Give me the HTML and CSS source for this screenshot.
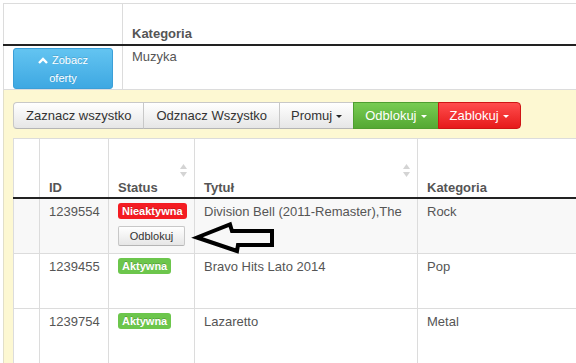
FILE: index.html
```html
<!DOCTYPE html>
<html lang="pl">
<head>
    <meta charset="UTF-8">
    <title>Oferty</title>
    <link rel="stylesheet" href="styles.css">
</head>
<body>
    <div class="page">
        <table class="offer">
            <thead>
                <tr>
                    <th class="offer-action"></th>
                    <th>Kategoria</th>
                </tr>
            </thead>
            <tbody>
                <tr>
                    <td class="offer-action">
                        <button class="btn-info">
                            <svg class="chevron" width="10" height="7" viewBox="0 0 10 7"><polyline points="1,6 5,2 9,6" fill="none" stroke="#fff" stroke-width="2.4"/></svg>
                            Zobacz<br>oferty
                        </button>
                    </td>
                    <td>Muzyka</td>
                </tr>
            </tbody>
        </table>

        <div class="panel">
            <div class="btn-group">
                <button class="btn">Zaznacz wszystko</button>
                <button class="btn">Odznacz Wszystko</button>
                <button class="btn btn-drop">Promuj<span class="caret"></span></button>
                <button class="btn btn-drop btn-success">Odblokuj<span class="caret"></span></button>
                <button class="btn btn-drop btn-danger">Zablokuj<span class="caret"></span></button>
            </div>

            <table class="items">
                <colgroup>
                    <col class="col-check">
                    <col class="col-id">
                    <col class="col-status">
                    <col class="col-title">
                    <col class="col-cat">
                </colgroup>
                <thead>
                    <tr>
                        <th></th>
                        <th>ID</th>
                        <th>
                            <div class="sortable">
                                <svg class="sort-icon" width="7" height="13" viewBox="0 0 7 13"><polygon points="3.5,0 7,5 0,5" fill="#d4d4d4"/><polygon points="0,8 7,8 3.5,13" fill="#d4d4d4"/></svg>
                                Status
                            </div>
                        </th>
                        <th>
                            <div class="sortable">
                                <svg class="sort-icon" width="7" height="13" viewBox="0 0 7 13"><polygon points="3.5,0 7,5 0,5" fill="#d4d4d4"/><polygon points="0,8 7,8 3.5,13" fill="#d4d4d4"/></svg>
                                Tytuł
                            </div>
                        </th>
                        <th>Kategoria</th>
                    </tr>
                </thead>
                <tbody>
                    <tr class="row-marked">
                        <td></td>
                        <td>1239554</td>
                        <td>
                            <span class="label label-off">Nieaktywna</span>
                            <button class="btn-mini">Odblokuj</button>
                        </td>
                        <td class="title-cell">
                            Division Bell (2011-Remaster),The
                            <svg class="pointer" width="86" height="38" viewBox="0 0 86 38"><polygon points="6,19.5 39,6.5 41,13 81,13 81,27 47,27 46,33" fill="none" stroke="#000" stroke-width="4" stroke-linejoin="miter"/></svg>
                        </td>
                        <td>Rock</td>
                    </tr>
                    <tr>
                        <td></td>
                        <td>1239455</td>
                        <td><span class="label label-on">Aktywna</span></td>
                        <td>Bravo Hits Lato 2014</td>
                        <td>Pop</td>
                    </tr>
                    <tr>
                        <td></td>
                        <td>1239754</td>
                        <td><span class="label label-on">Aktywna</span></td>
                        <td>Lazaretto</td>
                        <td>Metal</td>
                    </tr>
                </tbody>
            </table>
        </div>
    </div>
</body>
</html>
```

FILE: styles.css
```css
* {
    box-sizing: border-box;
}

html,
body {
    overflow: hidden;
}

body {
    margin: 0;
    background: #fff;
    color: #555;
    font-family: "Liberation Sans", Arial, sans-serif;
    font-size: 13px;
    line-height: 18px;
}

.page {
    width: 760px;
    padding: 3px 0 0 3px;
}

/* top offer table */
.offer {
    width: 100%;
    border-collapse: collapse;
    border-top: 1px solid #dcdcdc;
    border-left: 1px solid #dcdcdc;
}

.offer th {
    height: 41px;
    padding: 0 9px 1px;
    text-align: left;
    vertical-align: bottom;
    font-weight: bold;
    border-left: 1px solid #dcdcdc;
    border-bottom: 2px solid #222;
}

.offer td {
    padding: 2px 9px 0;
    vertical-align: top;
    border-left: 1px solid #dcdcdc;
    border-bottom: 1px solid #dcdcdc;
}

.offer .offer-action {
    width: 119px;
}

.btn-info {
    display: block;
    width: 100px;
    padding: 2px 6px 1px;
    border: 1px solid #3b9fd8;
    border-radius: 3px;
    background: linear-gradient(#63c4f1, #3ea8e2);
    color: #fff;
    font-family: inherit;
    font-size: 11px;
    line-height: 18px;
    text-shadow: 0 -1px 0 rgba(0, 0, 0, 0.15);
}

.chevron {
    margin-right: 1px;
    vertical-align: 0;
}

/* yellow panel */
.panel {
    min-height: 300px;
    padding: 12px 0 0 9px;
    background: #fdf8d2;
    border-left: 1px solid #e2dfc8;
}

.btn-group {
    display: flex;
}

.btn {
    margin-left: -1px;
    padding: 4px 12px 3px;
    border: 1px solid #c8c8c8;
    border-bottom-color: #b5b5b5;
    background: linear-gradient(#fff, #e6e6e6);
    color: #333;
    font-family: inherit;
    font-size: 13px;
    line-height: 18px;
}

.btn:first-child {
    margin-left: 0;
    border-radius: 4px 0 0 4px;
}

.btn:last-child {
    border-radius: 0 4px 4px 0;
}

.btn-drop {
    padding-left: 11px;
    padding-right: 11px;
}

.btn-success {
    border-color: #4f9e30;
    background: linear-gradient(#78cc52, #55a833);
    color: #fff;
}

.btn-danger {
    border-color: #cf1515;
    background: linear-gradient(#ff4d4d, #e61a1a);
    color: #fff;
}

.caret {
    display: inline-block;
    margin-left: 4px;
    vertical-align: middle;
    border-top: 3px solid #222;
    border-left: 3px solid transparent;
    border-right: 3px solid transparent;
}

.btn-success .caret,
.btn-danger .caret {
    border-top-color: #fff;
}

/* items table */
.items {
    width: 740px;
    margin-top: 9px;
    table-layout: fixed;
    border-collapse: collapse;
    background: #fff;
    border-top: 1px solid #dcdcdc;
    border-left: 1px solid #dcdcdc;
}

.col-check { width: 26px; }
.col-id { width: 69px; }
.col-status { width: 86px; }
.col-title { width: 223px; }

.items th {
    height: 60px;
    padding: 0 9px;
    text-align: left;
    vertical-align: bottom;
    font-weight: bold;
    border-left: 1px solid #dcdcdc;
    border-bottom: 2px solid #222;
}

.sortable {
    display: flex;
    flex-direction: column;
}

.sort-icon {
    align-self: flex-end;
    margin: 0 -2px 2px 0;
}

.items td {
    height: 55px;
    padding: 4px 9px;
    vertical-align: top;
    border-left: 1px solid #dcdcdc;
    border-bottom: 1px solid #dcdcdc;
}

.row-marked td {
    background: #f8f8f8;
}

.title-cell {
    position: relative;
}

.pointer {
    position: absolute;
    left: -4px;
    top: 19px;
}

.label {
    display: inline-block;
    padding: 2px 4px;
    border-radius: 3px;
    color: #fff;
    font-size: 11px;
    font-weight: bold;
    line-height: 12px;
    vertical-align: top;
    text-shadow: 0 -1px 0 rgba(0, 0, 0, 0.2);
}

.label-off {
    background: #f41c22;
}

.label-on {
    background: #6cc64c;
}

.btn-mini {
    display: block;
    width: 67px;
    margin-top: 5px;
    padding: 0;
    border: 1px solid #c8c8c8;
    border-bottom-color: #b5b5b5;
    border-radius: 2px;
    background: linear-gradient(#fff, #e6e6e6);
    color: #333;
    font-family: inherit;
    font-size: 11px;
    line-height: 18px;
}
```
